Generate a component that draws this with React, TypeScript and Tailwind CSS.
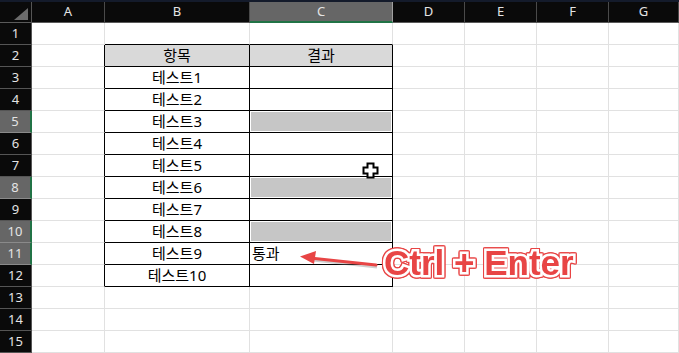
import React from 'react'

const cols = ['A', 'B', 'C', 'D', 'E', 'F', 'G']
const widths = ['w-[73px]', 'w-[145px]', 'w-[143px]', 'w-[72px]', 'w-[72px]', 'w-[72px]', 'flex-1']
const selectedRows = [5, 8, 10, 11]
const grayRows = [5, 8, 10]

const bValues: Record<number, string> = {
  2: '항목',
  3: '테스트1',
  4: '테스트2',
  5: '테스트3',
  6: '테스트4',
  7: '테스트5',
  8: '테스트6',
  9: '테스트7',
  10: '테스트8',
  11: '테스트9',
  12: '테스트10',
}

function Cell({ row, col }: { row: number; col: number }) {
  const inTable = row >= 2 && row <= 12
  // right border: black on A (left edge of table), B and C inside table rows
  const blackRight = inTable && (col === 0 || col === 1 || col === 2)
  // bottom border: black from row 1 (top edge) to row 12 in B/C
  const blackBottom = row >= 1 && row <= 12 && (col === 1 || col === 2)
  const header = row === 2 && (col === 1 || col === 2)
  const right = blackRight ? 'border-r-black' : 'border-r-[#e1e1e1]'
  const bottom = blackBottom ? 'border-b-black' : 'border-b-[#e1e1e1]'

  let content: React.ReactNode = null
  if (col === 1 && bValues[row]) {
    content = <span className="w-full text-center">{bValues[row]}</span>
  }
  if (col === 2 && row === 2) content = <span className="w-full text-center">결과</span>
  if (col === 2 && row === 11) content = <span className="pl-[2px]">통과</span>
  if (col === 2 && grayRows.includes(row)) {
    content = <div className="m-[1px] h-[19px] w-full bg-[#c6c6c6]" />
  }

  return (
    <div
      className={`${widths[col]} flex h-full shrink-0 items-center border-r border-b ${right} ${bottom} ${header ? 'bg-[#d9d9d9]' : 'bg-white'} text-[15px] leading-none text-black`}
    >
      {content}
    </div>
  )
}

export default function App() {
  return (
    <div
      className="relative h-[353px] w-[679px] overflow-hidden bg-white"
      style={{ fontFamily: '"Noto Sans", "Noto Sans CJK KR", sans-serif' }}
    >
      <div className="h-[2px] bg-[#141b2b]" />
      {/* column headers */}
      <div className="flex h-[21px] bg-[#0a0a0a] text-[13px] text-[#e4e4e4]">
        <div className="relative w-[32px] shrink-0 border-r border-b border-r-[#555] border-b-[#5a5a5a]">
          <svg className="absolute top-[6px] left-[14px]" width="14" height="12" viewBox="0 0 14 12">
            <polygon points="14,0 14,12 0,12" fill="#6b6b6b" />
          </svg>
        </div>
        {cols.map((c, i) => (
          <div
            key={c}
            className={`${widths[i]} flex shrink-0 items-center justify-center border-r ${
              c === 'C'
                ? 'border-b-2 border-r-[#a0a0a0] border-b-[#217346] bg-[#666]'
                : 'border-b border-r-[#4a4a4a] border-b-[#5a5a5a]'
            }`}
          >
            {c}
          </div>
        ))}
      </div>
      {Array.from({ length: 15 }, (_, r) => r + 1).map((row) => {
        const sel = selectedRows.includes(row)
        return (
          <div key={row} className="flex h-[22px]">
            <div
              className={`flex w-[32px] shrink-0 items-center justify-center border-b text-[13px] text-[#e4e4e4] ${
                sel
                  ? 'border-r-2 border-r-[#217346] border-b-[#8a8a8a] bg-[#666]'
                  : 'border-r border-r-[#555] border-b-[#555] bg-[#0a0a0a]'
              }`}
            >
              {row}
            </div>
            {cols.map((_, ci) => (
              <Cell key={ci} row={row} col={ci} />
            ))}
          </div>
        )
      })}

      {/* mouse cursor */}
      <svg className="absolute top-[162px] left-[362px]" width="17" height="17" viewBox="0 0 17 17">
        <path
          d="M5.5 1.5h6v4h4v6h-4v4h-6v-4h-4v-6h4z"
          fill="white"
          stroke="black"
          strokeWidth="2"
          strokeLinejoin="miter"
        />
      </svg>

      {/* arrow annotation */}
      <svg className="absolute top-[246px] left-[296px]" width="90" height="30" viewBox="0 0 90 30">
        <g opacity="0.35" transform="translate(1 2)">
          <line x1="16" y1="12" x2="80" y2="19" stroke="#777" strokeWidth="3" />
        </g>
        <line x1="14" y1="12" x2="80" y2="19" stroke="#e84545" strokeWidth="3" strokeLinecap="round" />
        <polygon points="4,10.5 20,5 18,18" fill="#e84545" />
      </svg>

      <span
        className="absolute top-[245px] left-[384px] text-[35px] leading-none font-bold whitespace-nowrap text-[#e84545] [-webkit-text-stroke:5px_white] [paint-order:stroke_fill] [filter:drop-shadow(1px_0_0_#e84545)_drop-shadow(-1px_0_0_#e84545)_drop-shadow(0_1px_0_#e84545)_drop-shadow(0_-1px_0_#e84545)]"
        style={{ fontFamily: '"Liberation Sans", Arial, sans-serif' }}
      >
        Ctrl + Enter
      </span>
    </div>
  )
}
